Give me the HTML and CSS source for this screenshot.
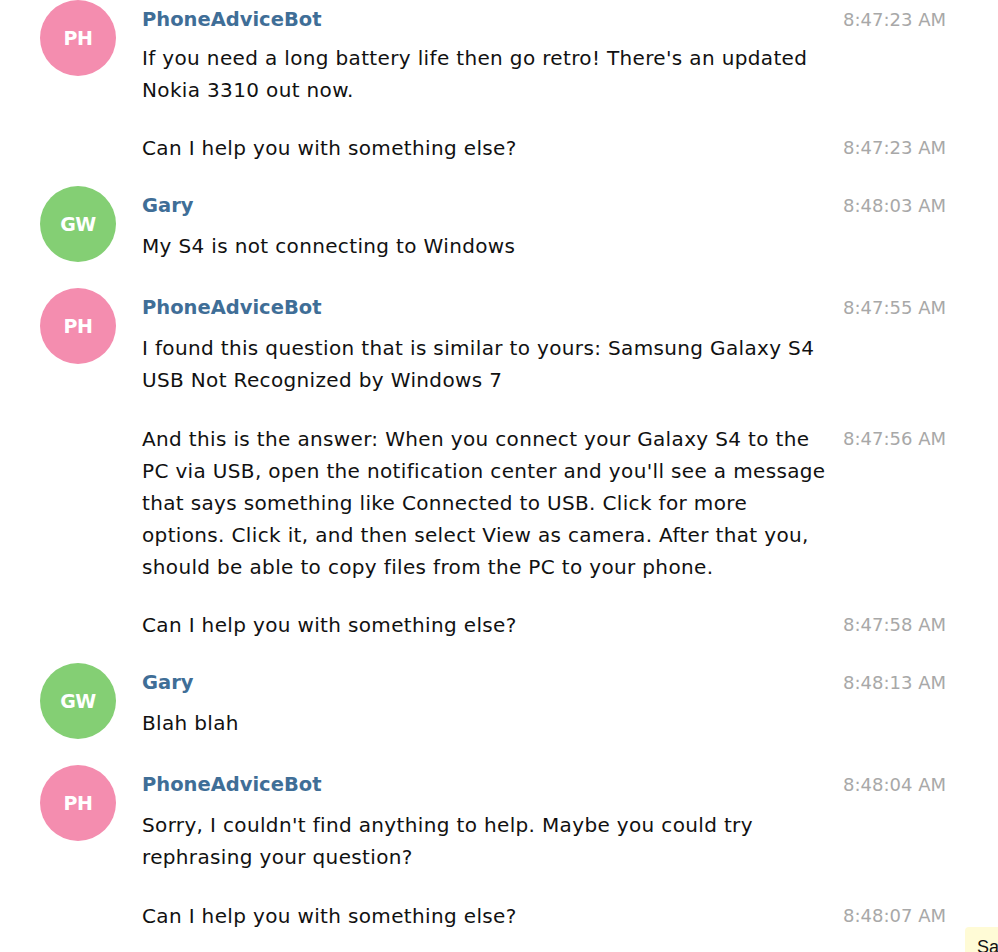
FILE: index.html
```html
<!DOCTYPE html>
<html>
<head>
<meta charset="utf-8">
<link rel="stylesheet" href="styles.css">
</head>
<body>
<div class="chat">
  <div class="group compact">
    <div class="avatar bot">PH</div>
    <div class="content">
      <div class="row head"><span class="name">PhoneAdviceBot</span><span class="time">8:47:23 AM</span></div>
      <div class="row msg first"><p class="text">If you need a long battery life then go retro! There's an updated Nokia 3310 out now.</p></div>
      <div class="row msg"><p class="text">Can I help you with something else?</p><span class="time">8:47:23 AM</span></div>
    </div>
  </div>

  <div class="group">
    <div class="avatar user">GW</div>
    <div class="content">
      <div class="row head"><span class="name">Gary</span><span class="time">8:48:03 AM</span></div>
      <div class="row msg first"><p class="text">My S4 is not connecting to Windows</p></div>
    </div>
  </div>

  <div class="group">
    <div class="avatar bot">PH</div>
    <div class="content">
      <div class="row head"><span class="name">PhoneAdviceBot</span><span class="time">8:47:55 AM</span></div>
      <div class="row msg first"><p class="text">I found this question that is similar to yours: Samsung Galaxy S4 USB Not Recognized by Windows 7</p></div>
      <div class="row msg"><p class="text">And this is the answer: When you connect your Galaxy S4 to the PC via USB, open the notification center and you'll see a message that says something like Connected to USB. Click for more options. Click it, and then select View as camera. After that you, should be able to copy files from the PC to your phone.</p><span class="time">8:47:56 AM</span></div>
      <div class="row msg"><p class="text">Can I help you with something else?</p><span class="time">8:47:58 AM</span></div>
    </div>
  </div>

  <div class="group">
    <div class="avatar user">GW</div>
    <div class="content">
      <div class="row head"><span class="name">Gary</span><span class="time">8:48:13 AM</span></div>
      <div class="row msg first"><p class="text">Blah blah</p></div>
    </div>
  </div>

  <div class="group">
    <div class="avatar bot">PH</div>
    <div class="content">
      <div class="row head"><span class="name">PhoneAdviceBot</span><span class="time">8:48:04 AM</span></div>
      <div class="row msg first"><p class="text">Sorry, I couldn't find anything to help. Maybe you could try rephrasing your question?</p></div>
      <div class="row msg"><p class="text">Can I help you with something else?</p><span class="time">8:48:07 AM</span></div>
    </div>
  </div>
</div>
<div class="tooltip">Sat Mar 04 2017</div>
</body>
</html>
```
FILE: styles.css
```css
html, body {
  margin: 0;
  padding: 0;
  overflow: hidden;
  background: #fff;
  height: 952px;
}
body {
  position: relative;
  font-family: "DejaVu Sans", sans-serif;
  color: #111;
}
.chat {
  padding: 0 52px 0 40px;
}
.group {
  display: flex;
  align-items: flex-start;
  gap: 26px;
  margin-bottom: 22px;
}
.avatar {
  flex: 0 0 76px;
  width: 76px;
  height: 76px;
  margin-bottom: 4px;
  border-radius: 50%;
  color: #fff;
  font-weight: bold;
  font-size: 19px;
  display: flex;
  align-items: center;
  justify-content: center;
  letter-spacing: -0.5px;
}
.avatar.bot { background: #f48daf; }
.avatar.user { background: #84cf74; }
.content {
  flex: 1;
  min-width: 0;
}
.row {
  display: flex;
  align-items: flex-start;
  justify-content: space-between;
}
.head {
  height: 36px;
  line-height: 36px;
  margin-top: 2px;
}
.name {
  font-weight: bold;
  font-size: 19.5px;
  color: #3f6e97;
}
.msg {
  margin-top: 26.5px;
}
.msg.first {
  margin-top: 6px;
}
.compact .msg {
  margin-top: 26px;
}
.compact .msg.first {
  margin-top: 4px;
}
.text {
  margin: 0;
  width: 692px;
  font-size: 20px;
  letter-spacing: 0.35px;
  line-height: 32px;
}
.time {
  font-size: 18px;
  color: #a8a8a8;
  line-height: 32px;
  white-space: nowrap;
}
.head .time {
  line-height: 36px;
}
.tooltip {
  position: absolute;
  left: 965px;
  top: 927px;
  padding: 10px 12px;
  background: #fffbd6;
  border-radius: 4px 0 0 0;
  font-family: "Liberation Sans", sans-serif;
  font-size: 18px;
  color: #111;
  white-space: nowrap;
}
```
